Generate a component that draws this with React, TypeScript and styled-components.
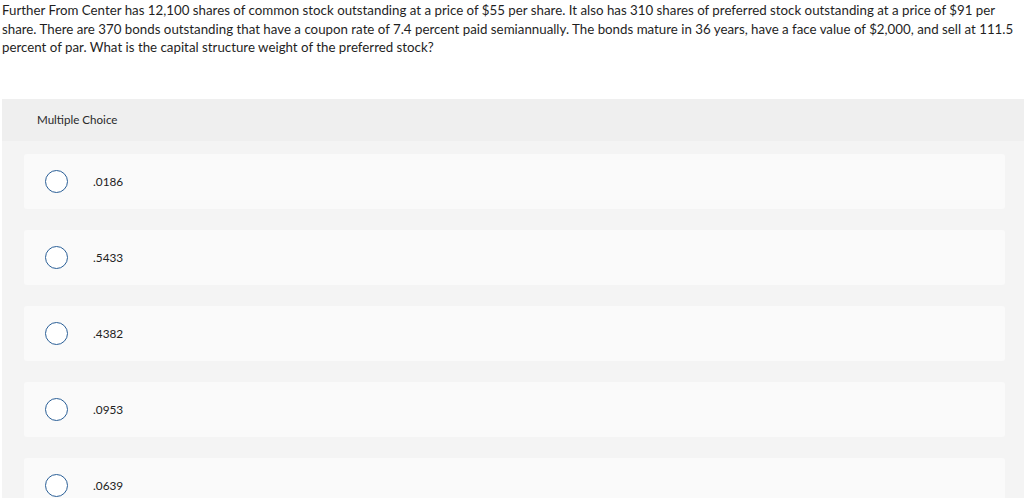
import styled, { createGlobalStyle } from 'styled-components';

const GlobalStyle = createGlobalStyle`
  body {
    margin: 0;
    background: #ffffff;
    font-family: Lato, "Open Sans", "Liberation Sans", sans-serif;
    color: #222;
  }
`;

const choices = ['.0186', '.5433', '.4382', '.0953', '.0639'];

const App = () => {
  return (
    <Page>
      <GlobalStyle />
      <Question>
        Further From Center has 12,100 shares of common stock outstanding at a price of $55 per share. It also has 310 shares of preferred stock outstanding at a price of $91 per share. There are 370 bonds outstanding that have a coupon rate of 7.4 percent paid semiannually. The bonds mature in 36 years, have a face value of $2,000, and sell at 111.5 percent of par. What is the capital structure weight of the preferred stock?
      </Question>
      <Panel>
        <PanelHeader>Multiple Choice</PanelHeader>
        <ChoiceList>
          {choices.map((c) => (
            <Choice key={c}>
              <Radio />
              <ChoiceText>{c}</ChoiceText>
            </Choice>
          ))}
        </ChoiceList>
      </Panel>
    </Page>
  );
};

export default App;

const Page = styled.div`
  width: 1024px;
  height: 498px;
  overflow: hidden;
`;

const Question = styled.p`
  margin: 0;
  padding: 1px 0 0 2px;
  font-size: 13.3px;
  line-height: 18.5px;
  color: #1f1f1f;
`;

const Panel = styled.div`
  margin: 42px 0 0 2px;
  background: #f4f4f4;
`;

const PanelHeader = styled.div`
  height: 42px;
  display: flex;
  align-items: center;
  padding-left: 35px;
  background: #efefef;
  font-size: 11.6px;
  color: #2a2a2a;
`;

const ChoiceList = styled.div`
  display: flex;
  flex-direction: column;
  gap: 21px;
  padding: 13px 19px 20px 22px;
`;

const Choice = styled.div`
  height: 55px;
  display: flex;
  align-items: center;
  background: #fafafa;
  border-radius: 3px;
  padding-left: 21px;
`;

const Radio = styled.span`
  width: 21px;
  height: 21px;
  border: 1px solid #2a5f97;
  border-radius: 50%;
  background: #fff;
  flex-shrink: 0;
`;

const ChoiceText = styled.span`
  margin-left: 25px;
  font-size: 11.8px;
  color: #222;
`;
